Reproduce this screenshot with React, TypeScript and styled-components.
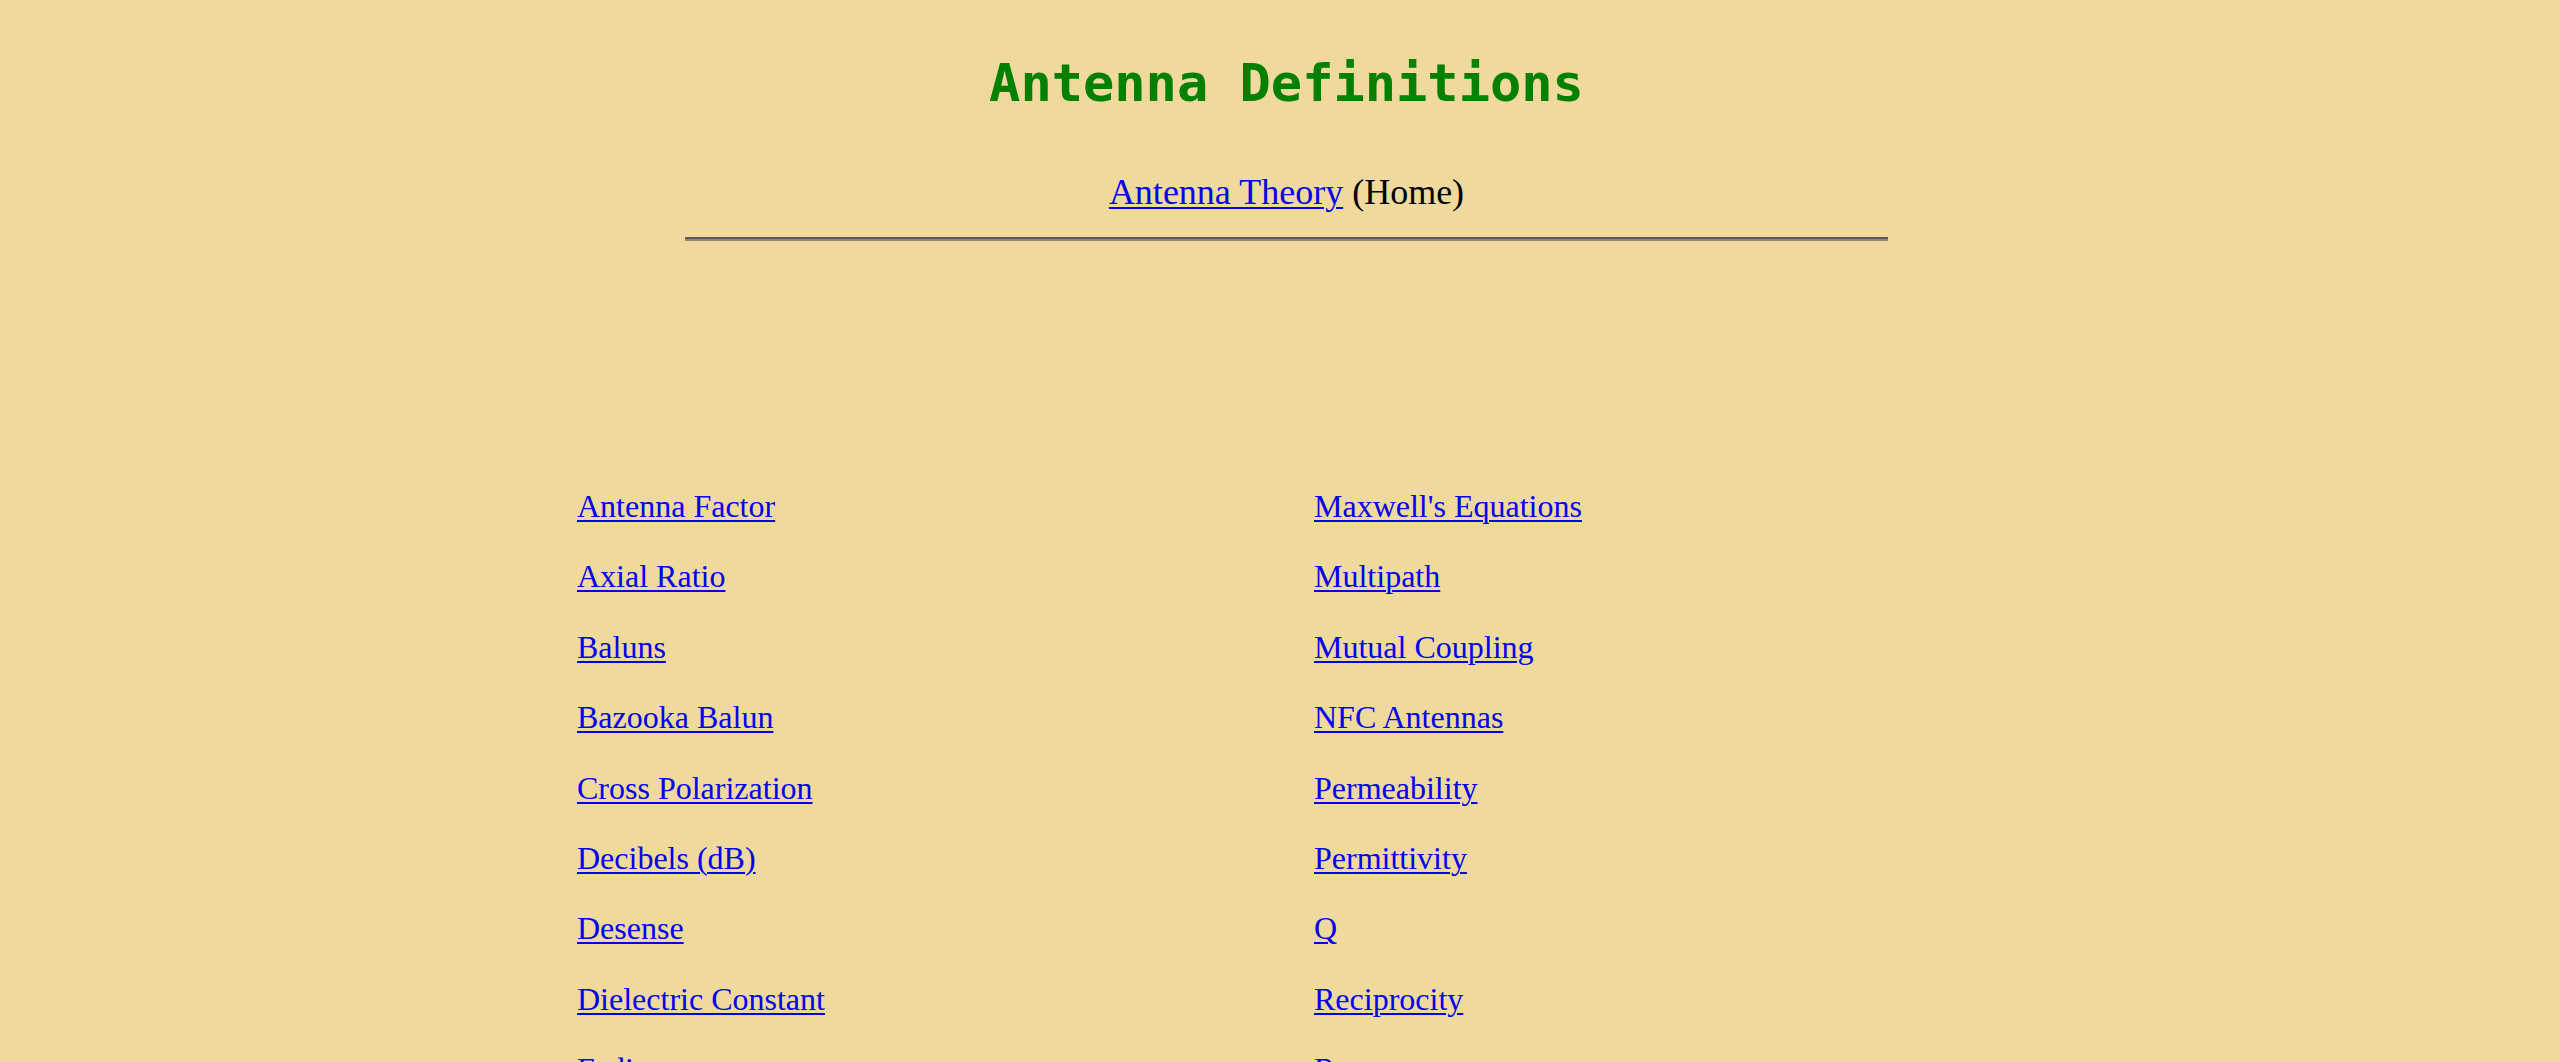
import React from "react";
import styled, { createGlobalStyle } from "styled-components";

const GlobalStyle = createGlobalStyle`
  html, body {
    margin: 0;
    padding: 0;
    overflow: hidden;
    background: #efd99c;
  }
  body {
    font-family: "Liberation Serif", "Times New Roman", serif;
    color: #000;
  }
`;

const Header = styled.header`
  padding-left: 13px;
  text-align: center;
`;

const Title = styled.h1`
  margin: 53px 0 0;
  font-family: "DejaVu Sans Mono", "Liberation Mono", monospace;
  font-weight: bold;
  font-size: 52px;
  line-height: 60px;
  color: #008000;
`;

const Subtitle = styled.p`
  margin: 59px 0 0;
  font-size: 36px;
  line-height: 40px;
`;

const Link = styled.a`
  color: #0000ee;
  text-decoration: underline;
  text-underline-offset: 3px;
  text-decoration-thickness: 2px;
`;

const Rule = styled.hr`
  width: 1203px;
  height: 0;
  margin: 25px auto 0;
  border: none;
  border-top: 2px solid #5a5a5a;
  border-bottom: 2px solid #948a74;
`;

const DefList = styled.ul`
  list-style: none;
  margin: 245px 0 0 577px;
  padding: 0;
  display: grid;
  grid-template-columns: 737px auto;
  grid-auto-flow: column;
  grid-template-rows: repeat(9, 70.4px);
`;

const Item = styled.li`
  font-size: 32px;
  line-height: 40px;
`;

const left = [
  "Antenna Factor",
  "Axial Ratio",
  "Baluns",
  "Bazooka Balun",
  "Cross Polarization",
  "Decibels (dB)",
  "Desense",
  "Dielectric Constant",
  "Fading",
];

const right = [
  "Maxwell's Equations",
  "Multipath",
  "Mutual Coupling",
  "NFC Antennas",
  "Permeability",
  "Permittivity",
  "Q",
  "Reciprocity",
  "Resonance",
];

export default function App() {
  return (
    <>
      <GlobalStyle />
      <Header>
        <Title>Antenna Definitions</Title>
        <Subtitle>
          <Link href="#">Antenna Theory</Link> (Home)
        </Subtitle>
        <Rule />
      </Header>
      <DefList>
        {[...left, ...right].map((t) => (
          <Item key={t}>
            <Link href="#">{t}</Link>
          </Item>
        ))}
      </DefList>
    </>
  );
}
